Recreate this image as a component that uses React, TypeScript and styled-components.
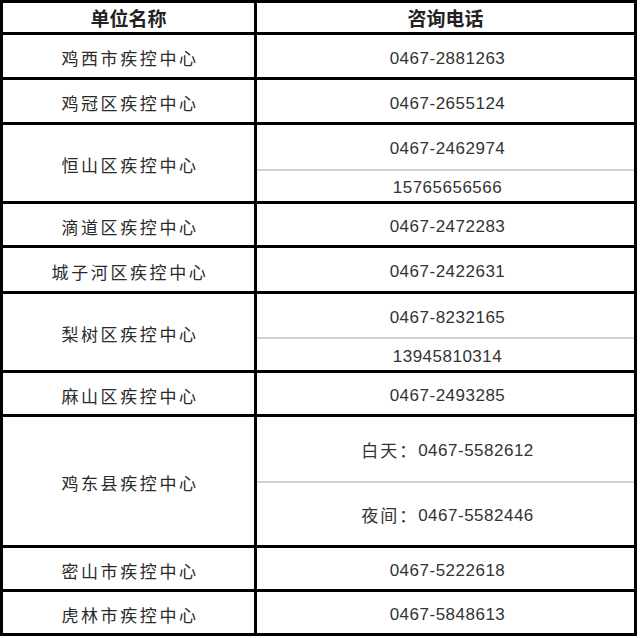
import React from "react";
import styled, { createGlobalStyle } from "styled-components";

const Global = createGlobalStyle`
  html, body { margin: 0; padding: 0; background: #fff; }
  body { font-family: "Liberation Sans", "Noto Sans CJK SC", sans-serif; }
`;

const Table = styled.div`
  width: 637px;
  box-sizing: border-box;
  display: grid;
  grid-template-columns: 251px 377px;
  grid-template-rows: 29px 42px 42px 76px 41px 43px 76px 41px 128px 41px 41px;
  column-gap: 3px;
  row-gap: 3px;
  padding: 3px;
  background: #000;
`;

const HeadCell = styled.div`
  background: #fff;
  display: flex;
  align-items: center;
  justify-content: center;
  font-family: "Noto Sans CJK SC", sans-serif;
  font-weight: 700;
  font-size: 19px;
  color: #222;
  padding-bottom: 1px;
`;

const NameCell = styled.div`
  background: #fff;
  display: flex;
  align-items: center;
  justify-content: center;
  font-family: "Noto Sans CJK SC", sans-serif;
  font-size: 17px;
  letter-spacing: 2.6px;
  color: #2a2a2a;
  padding: 3px 0 0 3px;
`;

const PhoneCell = styled.div`
  background: #fff;
  display: flex;
  flex-direction: column;
`;

const PhoneLine = styled.div<{ $grow: number }>`
  flex: ${(p) => p.$grow} 1 0;
  display: flex;
  align-items: center;
  justify-content: center;
  font-family: "Liberation Sans", "Noto Sans CJK SC", sans-serif;
  font-size: 17px;
  letter-spacing: 0.5px;
  color: #333;
  padding: 5px 0 0 4px;
  & + & {
    border-top: 2px solid #d2d2d2;
  }
`;

const Label = styled.span`
  font-family: "Noto Sans CJK SC", sans-serif;
  letter-spacing: 2px;
  position: relative;
  top: -2px;
`;

type Phone = { label?: string; num: string; grow: number };
type Row = { name: string; phones: Phone[] };

const rows: Row[] = [
  { name: "鸡西市疾控中心", phones: [{ num: "0467-2881263", grow: 1 }] },
  { name: "鸡冠区疾控中心", phones: [{ num: "0467-2655124", grow: 1 }] },
  {
    name: "恒山区疾控中心",
    phones: [
      { num: "0467-2462974", grow: 46 },
      { num: "15765656566", grow: 30 },
    ],
  },
  { name: "滴道区疾控中心", phones: [{ num: "0467-2472283", grow: 1 }] },
  { name: "城子河区疾控中心", phones: [{ num: "0467-2422631", grow: 1 }] },
  {
    name: "梨树区疾控中心",
    phones: [
      { num: "0467-8232165", grow: 44 },
      { num: "13945810314", grow: 30 },
    ],
  },
  { name: "麻山区疾控中心", phones: [{ num: "0467-2493285", grow: 1 }] },
  {
    name: "鸡东县疾控中心",
    phones: [
      { label: "白天：", num: "0467-5582612", grow: 65 },
      { label: "夜间：", num: "0467-5582446", grow: 63 },
    ],
  },
  { name: "密山市疾控中心", phones: [{ num: "0467-5222618", grow: 1 }] },
  { name: "虎林市疾控中心", phones: [{ num: "0467-5848613", grow: 1 }] },
];

export default function App() {
  return (
    <>
      <Global />
      <Table>
        <HeadCell>单位名称</HeadCell>
        <HeadCell>咨询电话</HeadCell>
        {rows.map((r) => (
          <React.Fragment key={r.name}>
            <NameCell>{r.name}</NameCell>
            <PhoneCell>
              {r.phones.map((p) => (
                <PhoneLine key={p.num} $grow={p.grow}>
                  {p.label && <Label>{p.label}</Label>}
                  {p.num}
                </PhoneLine>
              ))}
            </PhoneCell>
          </React.Fragment>
        ))}
      </Table>
    </>
  );
}
